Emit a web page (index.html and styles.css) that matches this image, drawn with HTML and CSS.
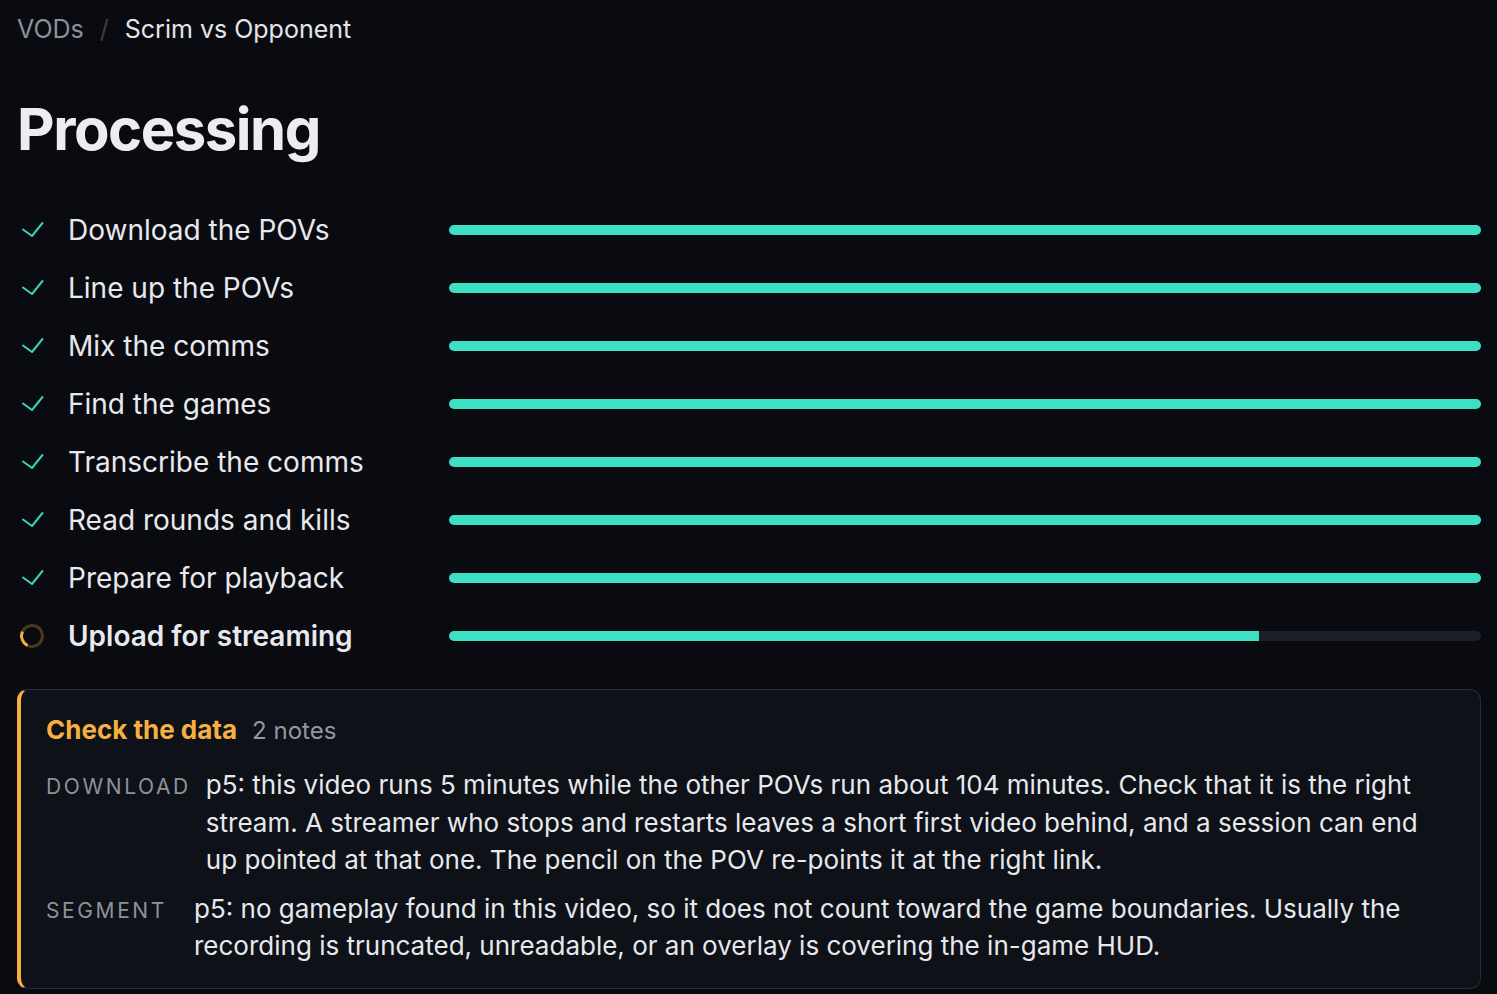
FILE: index.html
```html
<!DOCTYPE html>
<html lang="en">
	<head>
		<meta charset="UTF-8">
		<title>Processing - Scrim vs Opponent</title>
		<link rel="stylesheet" href="styles.css">
	</head>
	<body>

		<nav class="crumbs">
			<a class="crumb-link" href="#">VODs</a>
			<span class="crumb-sep">/</span>
			<span class="crumb-current">Scrim vs Opponent</span>
		</nav>

		<h1 class="page-title">Processing</h1>

		<ul class="steps">
			<li class="step">
				<span class="step-icon"><svg class="check" viewBox="0 0 24 24"><path d="M3 11.5L12 18L22.5 5"/></svg></span>
				<span class="step-label">Download the POVs</span>
				<span class="bar"><span class="bar-fill" style="width: 100%"></span></span>
			</li>
			<li class="step">
				<span class="step-icon"><svg class="check" viewBox="0 0 24 24"><path d="M3 11.5L12 18L22.5 5"/></svg></span>
				<span class="step-label">Line up the POVs</span>
				<span class="bar"><span class="bar-fill" style="width: 100%"></span></span>
			</li>
			<li class="step">
				<span class="step-icon"><svg class="check" viewBox="0 0 24 24"><path d="M3 11.5L12 18L22.5 5"/></svg></span>
				<span class="step-label">Mix the comms</span>
				<span class="bar"><span class="bar-fill" style="width: 100%"></span></span>
			</li>
			<li class="step">
				<span class="step-icon"><svg class="check" viewBox="0 0 24 24"><path d="M3 11.5L12 18L22.5 5"/></svg></span>
				<span class="step-label">Find the games</span>
				<span class="bar"><span class="bar-fill" style="width: 100%"></span></span>
			</li>
			<li class="step">
				<span class="step-icon"><svg class="check" viewBox="0 0 24 24"><path d="M3 11.5L12 18L22.5 5"/></svg></span>
				<span class="step-label">Transcribe the comms</span>
				<span class="bar"><span class="bar-fill" style="width: 100%"></span></span>
			</li>
			<li class="step">
				<span class="step-icon"><svg class="check" viewBox="0 0 24 24"><path d="M3 11.5L12 18L22.5 5"/></svg></span>
				<span class="step-label">Read rounds and kills</span>
				<span class="bar"><span class="bar-fill" style="width: 100%"></span></span>
			</li>
			<li class="step">
				<span class="step-icon"><svg class="check" viewBox="0 0 24 24"><path d="M3 11.5L12 18L22.5 5"/></svg></span>
				<span class="step-label">Prepare for playback</span>
				<span class="bar"><span class="bar-fill" style="width: 100%"></span></span>
			</li>
			<li class="step step-active">
				<span class="step-icon"><span class="spinner"></span></span>
				<span class="step-label">Upload for streaming</span>
				<span class="bar"><span class="bar-fill" style="width: 78.5%"></span></span>
			</li>
		</ul>

		<section class="notes-card">
			<header class="notes-head">
				<h2 class="notes-title">Check the data</h2>
				<span class="notes-count">2 notes</span>
			</header>
			<div class="note">
				<span class="note-tag">Download</span>
				<p class="note-text">p5: this video runs 5 minutes while the other POVs run about 104 minutes. Check that it is the right stream. A streamer who stops and restarts leaves a short first video behind, and a session can end up pointed at that one. The pencil on the POV re-points it at the right link.</p>
			</div>
			<div class="note">
				<span class="note-tag">Segment</span>
				<p class="note-text">p5: no gameplay found in this video, so it does not count toward the game boundaries. Usually the recording is truncated, unreadable, or an overlay is covering the in-game HUD.</p>
			</div>
		</section>

	</body>
</html>
```

FILE: styles.css
```css
/* base */
* {
	margin: 0;
	padding: 0;
	box-sizing: border-box;
}

body {
	background: #0a0b10;
	color: #e8e9ee;
	font-family: Inter, "Noto Sans", sans-serif;
	padding: 10px 16px 0 17px;
}

/* breadcrumb */
.crumbs {
	display: flex;
	align-items: center;
	gap: 16px;
	font-size: 25px;
	height: 38px;
}

.crumb-link {
	color: #8b909b;
	text-decoration: none;
}

.crumb-sep {
	color: #3a3e48;
}

.crumb-current {
	color: #e3e5ea;
}

.page-title {
	font-size: 58px;
	font-weight: 700;
	letter-spacing: -1.45px;
	line-height: 1;
	margin-top: 52px;
	color: #ecedf2;
}

/* steps list */
.steps {
	list-style: none;
	margin-top: 43px;
}

.step {
	display: grid;
	grid-template-columns: 51px 381px 1fr;
	align-items: center;
	height: 58px;
}

.step-icon {
	display: flex;
	align-items: center;
	padding-left: 3px;
}

.check {
	width: 24px;
	height: 24px;
	fill: none;
	stroke: #3cd2b4;
	stroke-width: 2;
	stroke-linecap: round;
	stroke-linejoin: round;
}

.spinner {
	display: block;
	width: 24px;
	height: 24px;
	border-radius: 50%;
	border: 3px solid #4a3a1a;
	border-left-color: #f5b041;
	transform: rotate(-20deg);
}

.step-label {
	font-size: 28px;
}

.step-active .step-label {
	font-weight: 600;
}

.bar {
	display: block;
	height: 10px;
	border-radius: 5px;
	background: #1a1f28;
	overflow: hidden;
}

.bar-fill {
	display: block;
	height: 100%;
	background: #3ee0c4;
}

/* notes card */
.notes-card {
	margin-top: 24px;
	background: #0e1117;
	border: 1px solid #282c36;
	border-left: 4px solid #f5b041;
	border-radius: 11px;
	padding: 24px 40px 23px 25px;
}

.notes-head {
	display: flex;
	align-items: baseline;
	gap: 15px;
}

.notes-title {
	font-size: 26px;
	font-weight: 700;
	color: #f5b041;
}

.notes-count {
	font-size: 24px;
	color: #9298a3;
}

.note {
	display: flex;
	align-items: baseline;
	gap: 15px;
	margin-top: 21px;
}

.note + .note {
	margin-top: 11px;
}

.note-tag {
	flex: none;
	min-width: 133px;
	font-size: 21px;
	letter-spacing: 2.6px;
	text-transform: uppercase;
	color: #8d929c;
}

.note-text {
	font-size: 26px;
	line-height: 37.5px;
	color: #e6e8ec;
}
```
